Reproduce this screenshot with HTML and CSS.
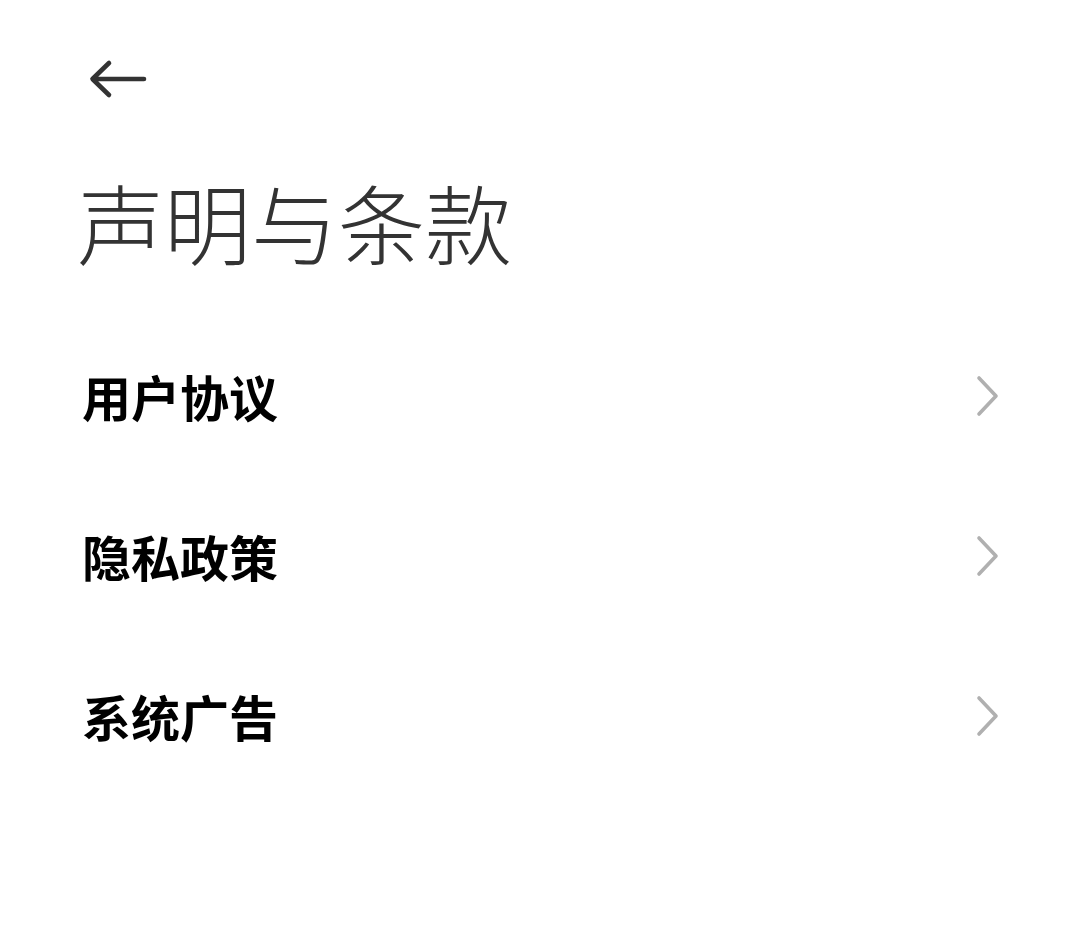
FILE: index.html
```html
<!DOCTYPE html>
<html lang="zh-CN">
<head>
<meta charset="utf-8">
<link rel="stylesheet" href="styles.css">
</head>
<body>
<div class="page">
  <div class="topbar">
    <svg class="back" width="60" height="44" viewBox="0 0 60 44">
      <path d="M56 20 H5 M21 4 L4.5 20 L21 36" fill="none" stroke="#333" stroke-width="4.6" stroke-linecap="round" stroke-linejoin="round"/>
    </svg>
  </div>
  <h1 class="title">声明与条款</h1>
  <ul class="list">
    <li class="item"><span class="label">用户协议</span><svg class="chev" width="24" height="42" viewBox="0 0 24 42"><path d="M3 3 L20 21 L3 39" fill="none" stroke="#b0b0b0" stroke-width="3.6" stroke-linecap="round" stroke-linejoin="round"/></svg></li>
    <li class="item"><span class="label">隐私政策</span><svg class="chev" width="24" height="42" viewBox="0 0 24 42"><path d="M3 3 L20 21 L3 39" fill="none" stroke="#b0b0b0" stroke-width="3.6" stroke-linecap="round" stroke-linejoin="round"/></svg></li>
    <li class="item"><span class="label">系统广告</span><svg class="chev" width="24" height="42" viewBox="0 0 24 42"><path d="M3 3 L20 21 L3 39" fill="none" stroke="#b0b0b0" stroke-width="3.6" stroke-linecap="round" stroke-linejoin="round"/></svg></li>
  </ul>
</div>
</body>
</html>
```
FILE: styles.css
```css
html, body {
  margin: 0;
  padding: 0;
  background: #fff;
}
body {
  font-family: "Noto Sans CJK SC", "Noto Sans", sans-serif;
  width: 1080px;
  height: 935px;
  overflow: hidden;
}
.page {
  padding: 0 80px 0 82px;
}
.topbar {
  height: 100px;
  padding-top: 59px;
  box-sizing: border-box;
  display: flex;
  align-items: flex-start;
}
.back {
  display: block;
  margin-left: 6px;
}
.title {
  margin: 71px 0 0 -5px;
  font-size: 87px;
  font-weight: 300;
  color: #333;
  line-height: 100px;
  letter-spacing: 0;
}
.list {
  list-style: none;
  margin: 45px 0 0 0;
  padding: 0;
}
.item {
  height: 160px;
  display: flex;
  align-items: center;
  justify-content: space-between;
}
.label {
  font-size: 49px;
  font-weight: 600;
  color: #000;
  line-height: 60px;
}
.chev {
  display: block;
  margin-right: 0;
}
```
